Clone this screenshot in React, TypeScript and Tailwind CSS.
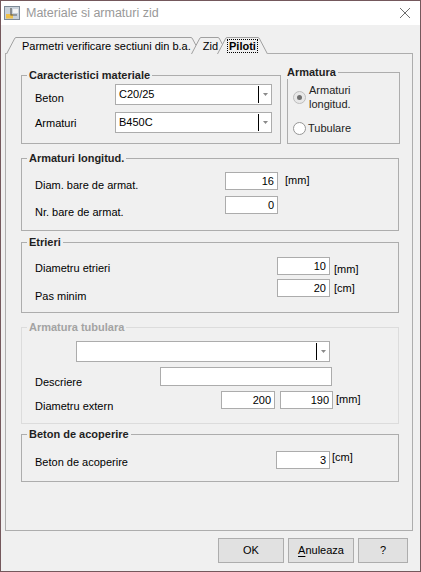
import clsx from 'clsx';

// Small pieces of the classic dialog look: group boxes, edits, combos, radios

function GroupBox({
  title,
  disabled,
  className,
  children,
}: {
  title: string;
  disabled?: boolean;
  className?: string;
  children?: React.ReactNode;
}) {
  return (
    <fieldset className={clsx('border pl-[13px]', disabled ? 'border-[#dcdcdc]' : 'border-[#adadad]', className)}>
      <legend
        className={clsx(
          'ml-[-8px] px-[2px] text-[11px] font-bold leading-[14px]',
          disabled ? 'text-[#a3a3a3]' : 'text-[#1f1f1f]'
        )}
      >
        {title}
      </legend>
      {children}
    </fieldset>
  );
}

function Combo({ value, className }: { value?: string; className?: string }) {
  return (
    <div className={clsx('flex h-[21px] border border-[#acacac] bg-white', className)}>
      <div className="flex-1 pl-[3px] leading-[19px]">{value}</div>
      <div className="my-[1px] w-px bg-black" />
      <div className="flex w-[12px] items-center justify-center">
        <svg width="5" height="3" viewBox="0 0 5 3">
          <path d="M0 0h5L2.5 3z" fill="#8a8a8a" />
        </svg>
      </div>
    </div>
  );
}

function Field({ value, className }: { value?: string; className?: string }) {
  return (
    <div className={clsx('h-[18px] border border-[#acacac] bg-white pr-[3px] text-right leading-[16px]', className)}>
      {value}
    </div>
  );
}

function Radio({ checked, dim }: { checked?: boolean; dim?: boolean }) {
  return (
    <span
      className={clsx(
        'flex h-[13px] w-[13px] shrink-0 items-center justify-center rounded-full border',
        dim ? 'border-[#bdbdbd] bg-[#e8e8e8]' : 'border-[#969696] bg-white'
      )}
    >
      {checked && <span className="h-[5px] w-[5px] rounded-full bg-[#707070]" />}
    </span>
  );
}

function Tab({ label, active, className }: { label: string; active?: boolean; className: string }) {
  return (
    <div className={clsx('relative mb-[-1px] flex h-[17px]', className)}>
      <svg width="10" height="17" viewBox="0 0 10 17" className="shrink-0">
        <polygon points="0,17 8.5,1 10,0 10,17" fill="#f0f0f0" />
        <path d="M0.5 17 L8.4 2 Q9 0.5 10 0.5" fill="none" stroke="#a0a0a0" />
      </svg>
      <div className="border-t border-[#a0a0a0] bg-[#f0f0f0] pt-[1px] leading-[14px]">
        {active ? (
          <span className="border border-dotted border-black px-[1px] font-bold">{label}</span>
        ) : (
          label
        )}
      </div>
      <svg width="10" height="17" viewBox="0 0 10 17" className="shrink-0">
        <polygon points="0,0 1.5,0 10,17 0,17" fill="#f0f0f0" />
        <path d="M0 0.5 Q1 0.5 1.6 2 L9.5 17" fill="none" stroke="#a0a0a0" />
      </svg>
    </div>
  );
}

function AppIcon() {
  return (
    <svg width="16" height="16" viewBox="0 0 16 16">
      <rect x="0.5" y="1.5" width="15" height="13" fill="#c9d2db" stroke="#7d8a97" />
      <rect x="2" y="9" width="7" height="4.5" fill="#efc14a" />
      <path d="M7 3v7h6" fill="none" stroke="#5d5d5d" strokeWidth="1.2" />
      <rect x="9" y="4" width="5" height="4" fill="#f4f4f4" />
    </svg>
  );
}

export default function App() {
  return (
    <div className="flex h-[572px] w-[421px] flex-col border border-[#74585c] bg-[#f0f0f0] font-['Liberation_Sans',Arial,sans-serif] text-[11px] text-black">
      {/* title bar */}
      <div className="flex h-[24px] items-center bg-white pl-[3px] pr-[10px]">
        <AppIcon />
        <span className="ml-[6px] flex-1 text-[12.5px] text-[#999999]">Materiale si armaturi zid</span>
        <svg width="10" height="10" viewBox="0 0 10 10">
          <path d="M0 0L10 10M10 0L0 10" stroke="#6e6e6e" strokeWidth="1" />
        </svg>
      </div>

      {/* tabs */}
      <div className="flex pl-[5px] pt-[12px]">
        <Tab label="Parmetri verificare sectiuni din b.a." className="z-[1] [&>div]:pl-[6px]" />
        <Tab label="Zid" className="z-[2] ml-[-10px] [&>div]:pl-[2px]" />
        <Tab active label="Piloti" className="z-[3] ml-[-11px]" />
      </div>

      <div className="ml-[4px] h-[478px] w-[408px] border border-[#adadad] pl-[15px]">
        <div className="flex items-start gap-[6px]">
          <GroupBox title="Caracteristici materiale" className="mt-[14px] h-[76px] w-[260px]">
            <div className="mt-[2px] flex h-[21px] items-start">
              <span className="mt-[7px] w-[80px] leading-[14px]">Beton</span>
              <Combo value="C20/25" className="w-[157px]" />
            </div>
            <div className="mt-[7px] flex h-[21px] items-start">
              <span className="mt-[4px] w-[80px] leading-[14px]">Armaturi</span>
              <Combo value="B450C" className="w-[157px]" />
            </div>
          </GroupBox>

          <GroupBox title="Armatura" className="mt-[11px] h-[79px] w-[113px] !pl-[5px]">
            <div className="mt-[4px] flex items-center gap-[3px]">
              <Radio checked dim />
              <span className="leading-[14px] text-[#222]">
                Armaturi
                <br />
                longitud.
              </span>
            </div>
            <div className="mt-[10px] flex items-center gap-[2px]">
              <Radio />
              <span className="leading-[14px] text-[#222]">Tubulare</span>
            </div>
          </GroupBox>
        </div>

        <GroupBox title="Armaturi longitud." className="mt-[7px] h-[80px] w-[378px]">
          <div className="mt-[7px] flex h-[18px] items-start">
            <span className="mt-[6px] w-[190px] leading-[14px]">Diam. bare de armat.</span>
            <Field value="16" className="w-[53px]" />
            <span className="ml-[7px] mt-[1px] leading-[14px]">[mm]</span>
          </div>
          <div className="mt-[6px] flex h-[18px] items-start">
            <span className="mt-[9px] w-[190px] leading-[14px]">Nr. bare de armat.</span>
            <Field value="0" className="w-[53px]" />
          </div>
        </GroupBox>

        <GroupBox title="Etrieri" className="mt-[4px] h-[78px] w-[378px]">
          <div className="mt-[8px] flex h-[18px] items-start">
            <span className="mt-[4px] w-[242px] leading-[14px]">Diametru etrieri</span>
            <Field value="10" className="w-[53px]" />
            <span className="ml-[4px] mt-[5px] leading-[14px]">[mm]</span>
          </div>
          <div className="mt-[4px] flex h-[18px] items-start">
            <span className="mt-[10px] w-[242px] leading-[14px]">Pas minim</span>
            <Field value="20" className="w-[53px]" />
            <span className="ml-[4px] mt-[2px] leading-[14px]">[cm]</span>
          </div>
        </GroupBox>

        <GroupBox disabled title="Armatura tubulara" className="mt-[7px] h-[104px] w-[378px]">
          <Combo className="ml-[41px] mt-[7px] w-[254px]" />
          <div className="mt-[5px] flex h-[19px] items-start">
            <span className="mt-[8px] w-[125px] leading-[14px]">Descriere</span>
            <div className="h-[19px] w-[172px] border border-[#acacac] bg-white" />
          </div>
          <div className="mt-[5px] flex h-[18px] items-start">
            <span className="mt-[8px] w-[186px] leading-[14px]">Diametru extern</span>
            <Field value="200" className="w-[54px]" />
            <Field value="190" className="ml-[5px] w-[53px]" />
            <span className="ml-[3px] mt-[1px] leading-[14px]">[mm]</span>
          </div>
        </GroupBox>

        <GroupBox title="Beton de acoperire" className="mt-[3px] h-[55px] w-[378px]">
          <div className="mt-[10px] flex h-[18px] items-start">
            <span className="mt-[4px] w-[241px] leading-[14px]">Beton de acoperire</span>
            <Field value="3" className="w-[54px]" />
            <span className="ml-[2px] mt-[-1px] leading-[14px]">[cm]</span>
          </div>
        </GroupBox>
      </div>

      {/* dialog buttons */}
      <div className="mt-[7px] flex justify-end gap-[4px] pr-[12px]">
        <button className="h-[25px] w-[66px] border border-[#adadad] bg-[#e1e1e1] leading-[23px]">OK</button>
        <button className="h-[25px] w-[66px] border border-[#adadad] bg-[#e1e1e1] leading-[23px]">
          <span className="underline underline-offset-2">A</span>nuleaza
        </button>
        <button className="h-[25px] w-[50px] border border-[#adadad] bg-[#e1e1e1] leading-[23px]">?</button>
      </div>
    </div>
  );
}
